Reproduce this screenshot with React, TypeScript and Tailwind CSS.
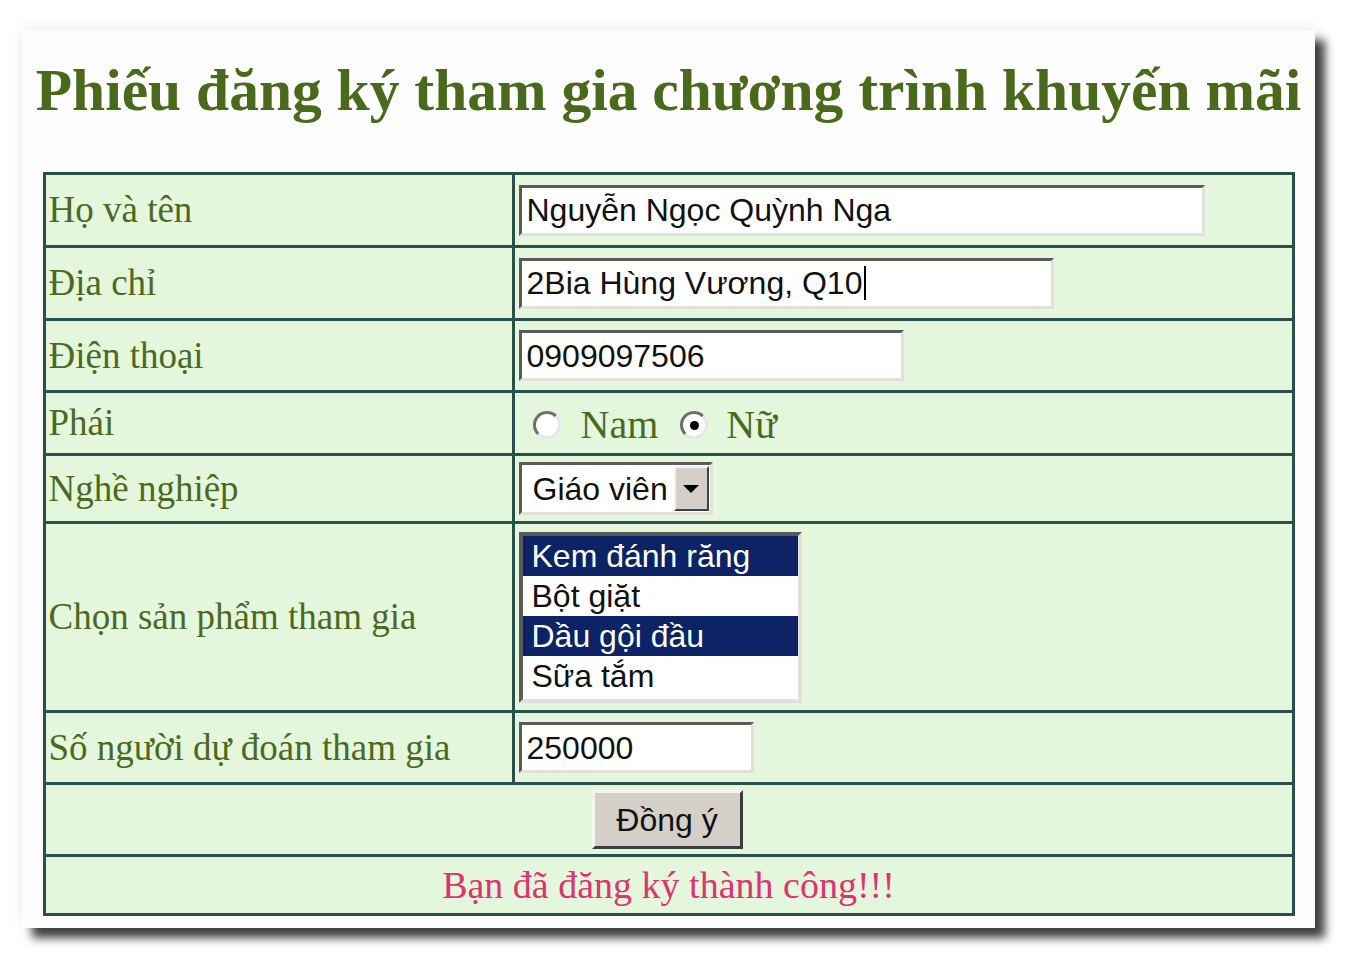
import React from "react";

const serif = "font-['Liberation_Serif','Times_New_Roman',serif]";
const sans = "font-['Liberation_Sans',Arial,sans-serif]";

function TextBox({ value, width, caret }: { value: string; width: string; caret?: boolean }) {
  return (
    <div
      className={`${width} h-[51px] bg-white border-[3px] border-t-[#5a5a5a] border-l-[#5a5a5a] border-b-[#e2e0da] border-r-[#e2e0da] flex items-center pl-[5px] text-[32px] text-[#111] ${sans}`}
    >
      <span>{value}</span>
      {caret && <span className="w-[2px] h-[34px] bg-black ml-[2px]"></span>}
    </div>
  );
}

function Radio({ checked }: { checked?: boolean }) {
  return (
    <span className="w-[28px] h-[28px] rounded-full bg-white border-[3px] border-t-[#6e6e6e] border-l-[#6e6e6e] border-b-[#e6e6e6] border-r-[#e6e6e6] flex items-center justify-center">
      {checked && <span className="w-[9px] h-[9px] rounded-full bg-black"></span>}
    </span>
  );
}

function Row({ label, h, children }: { label: string; h: string; children?: React.ReactNode }) {
  return (
    <div className={`flex ${h} border-t-[3px] border-[#29514b] first:border-t-0`}>
      <div className={`w-[469px] shrink-0 border-r-[3px] border-[#29514b] flex items-center pl-[3px] text-[37px] text-[#4b6a1f] ${serif}`}>
        {label}
      </div>
      <div className="flex-1 flex items-center pl-[4px]">{children}</div>
    </div>
  );
}

const products = [
  { name: "Kem đánh răng", sel: true },
  { name: "Bột giặt", sel: false },
  { name: "Dầu gội đầu", sel: true },
  { name: "Sữa tắm", sel: false },
];

export default function App() {
  return (
    <div className="w-[1356px] h-[962px] bg-white pt-[30px] pl-[22px]">
      <div className="w-[1293px] h-[898px] bg-[#fdfdfd] shadow-[10px_10px_9px_rgba(0,0,0,0.75),0_-2px_14px_rgba(0,0,0,0.08)] flex flex-col items-center">
        <h1 className={`mt-[25px] text-[59.5px] leading-[70px] font-bold text-[#4a6a1b] ${serif}`}>
          Phiếu đăng ký tham gia chương trình khuyến mãi
        </h1>
        <div className="mt-[47px] w-[1252px] border-[3px] border-[#29514b] bg-[#e4f7dc]">
          <Row label="Họ và tên" h="h-[70px]">
            <TextBox value="Nguyễn Ngọc Quỳnh Nga" width="w-[686px]" />
          </Row>
          <Row label="Địa chỉ" h="h-[73px]">
            <TextBox value="2Bia Hùng Vương, Q10" width="w-[535px]" caret />
          </Row>
          <Row label="Điện thoại" h="h-[72px]">
            <TextBox value="0909097506" width="w-[385px]" />
          </Row>
          <Row label="Phái" h="h-[63px]">
            <div className={`flex items-center pl-[14px] pt-[4px] text-[40px] text-[#4b6a1f] ${serif}`}>
              <Radio />
              <span className="ml-[20px] mr-[22px]">Nam</span>
              <Radio checked />
              <span className="ml-[18px]">Nữ</span>
            </div>
          </Row>
          <Row label="Nghề nghiệp" h="h-[68px]">
            <div className={`w-[194px] h-[53px] bg-white border-[3px] border-t-[#5a5a5a] border-l-[#5a5a5a] border-b-[#e2e0da] border-r-[#e2e0da] flex items-center text-[32px] text-[#111] ${sans}`}>
              <span className="flex-1 pl-[11px]">Giáo viên</span>
              <span className="w-[35px] h-[45px] mr-[1px] bg-[#d4d0c8] border-[2px] border-t-[#f2f1ee] border-l-[#f2f1ee] border-b-[#404040] border-r-[#404040] flex items-center justify-center">
                <span className="w-0 h-0 border-l-[8px] border-r-[8px] border-t-[8px] border-l-transparent border-r-transparent border-t-black"></span>
              </span>
            </div>
          </Row>
          <Row label="Chọn sản phẩm tham gia" h="h-[189px]">
            <div className={`w-[283px] h-[171px] bg-white border-[4px] border-t-[#5a5a5a] border-l-[#5a5a5a] border-b-[#e2e0da] border-r-[#e2e0da] text-[32px] ${sans}`}>
              {products.map((p) => (
                <div
                  key={p.name}
                  className={`h-[40px] leading-[40px] pl-[9px] ${p.sel ? "bg-[#0c2465] text-white" : "bg-white text-[#111]"}`}
                >
                  {p.name}
                </div>
              ))}
            </div>
          </Row>
          <Row label="Số người dự đoán tham gia" h="h-[72px]">
            <TextBox value="250000" width="w-[235px]" />
          </Row>
          <div className="h-[72px] border-t-[3px] border-[#29514b] flex items-center justify-center pr-[3px]">
            <button className={`w-[151px] h-[59px] bg-[#d4d0c8] border-[3px] border-t-[#f5f4f1] border-l-[#f5f4f1] border-b-[#3c3c3c] border-r-[#3c3c3c] text-[32px] text-[#111] ${sans}`}>
              Đồng ý
            </button>
          </div>
          <div className={`h-[59px] border-t-[3px] border-[#29514b] flex items-center justify-center text-[38px] text-[#e13270] ${serif}`}>
            Bạn đã đăng ký thành công!!!
          </div>
        </div>
      </div>
    </div>
  );
}
